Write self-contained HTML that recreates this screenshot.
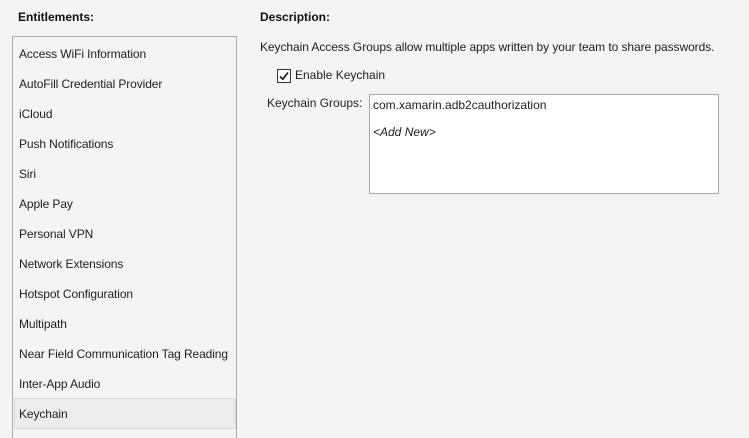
<!DOCTYPE html>
<html><head><meta charset="utf-8"><style>
html,body{margin:0;width:749px;height:438px;overflow:hidden}
body{background:#f4f4f4;font-family:"Liberation Sans",sans-serif;font-size:12px;color:#1e1e1e;position:relative}
.a{position:absolute;white-space:nowrap}
.h{font-weight:bold;color:#111}
#list{position:absolute;left:12px;top:36px;width:223px;height:402px;border:1px solid #a9a9a9;border-bottom:none;background:#f4f4f4}
.it{position:absolute;left:6px;letter-spacing:-0.1px}
#sel{position:absolute;left:1px;top:361px;width:220px;height:29px;background:#ececec;border:1px solid #d9d9d9}
#tb{position:absolute;left:369px;top:94px;width:348px;height:98px;background:#fff;border:1px solid #a9a9ab}
#cb{position:absolute;left:277px;top:69px;width:12px;height:12px;border:1px solid #333;background:#fff}
</style></head><body>
<div class="a h" style="left:18px;top:10px">Entitlements:</div>
<div class="a h" style="left:260px;top:10px">Description:</div>
<div id="list">
<div id="sel"></div>
<div class="it" style="top:10px">Access WiFi Information</div>
<div class="it" style="top:40px">AutoFill Credential Provider</div>
<div class="it" style="top:70px">iCloud</div>
<div class="it" style="top:100px">Push Notifications</div>
<div class="it" style="top:130px">Siri</div>
<div class="it" style="top:160px">Apple Pay</div>
<div class="it" style="top:190px">Personal VPN</div>
<div class="it" style="top:220px">Network Extensions</div>
<div class="it" style="top:250px">Hotspot Configuration</div>
<div class="it" style="top:280px">Multipath</div>
<div class="it" style="top:310px">Near Field Communication Tag Reading</div>
<div class="it" style="top:340px">Inter-App Audio</div>
<div class="it" style="top:370px">Keychain</div>
</div>
<div class="a" style="left:260px;top:40px;letter-spacing:-0.07px">Keychain Access Groups allow multiple apps written by your team to share passwords.</div>
<div id="cb"><svg width="12" height="12" viewBox="0 0 12 12" style="position:absolute;left:0;top:0"><path d="M2 6.5 L4.8 9.2 L10 2.5" stroke="#222" stroke-width="1.8" fill="none"/></svg></div>
<div class="a" style="left:295px;top:68px">Enable Keychain</div>
<div class="a" style="left:267px;top:96px;color:#2a1a1a">Keychain Groups:</div>
<div id="tb">
<div class="a" style="left:3px;top:3px">com.xamarin.adb2cauthorization</div>
<div class="a" style="left:3px;top:30px;font-style:italic">&lt;Add New&gt;</div>
</div>
</body></html>
